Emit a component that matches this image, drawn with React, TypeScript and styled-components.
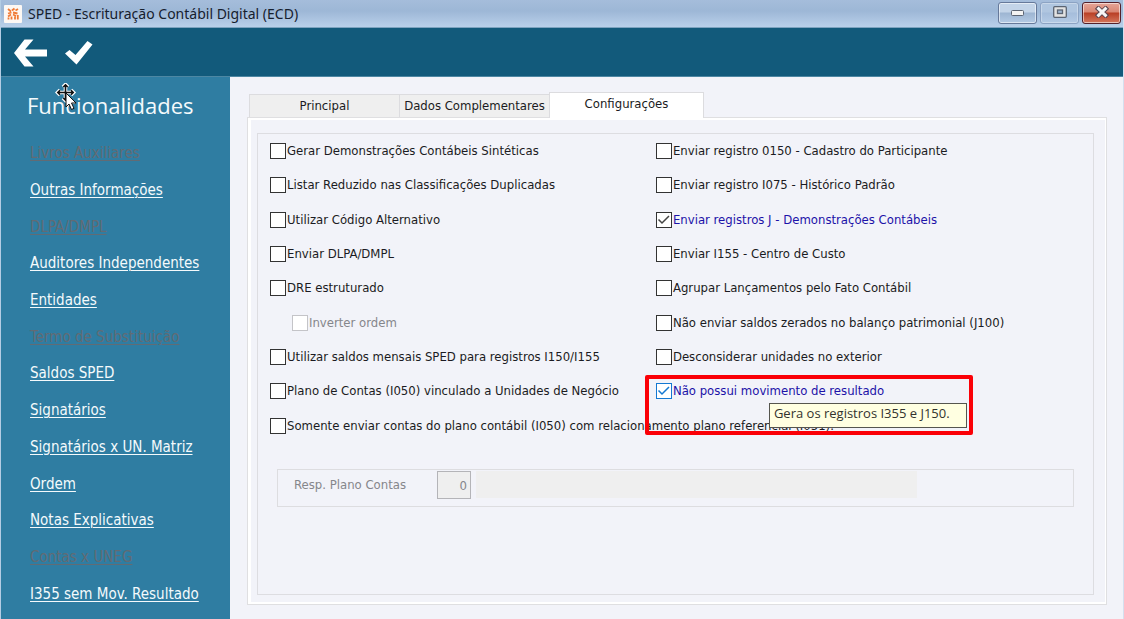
import React, { useState } from "react";
import styled, { createGlobalStyle, css } from "styled-components";

const uiFont = `"DejaVu Sans Condensed", "Noto Sans", sans-serif`;
const titleFont = `"Noto Sans", sans-serif`;
const humanist = `"Open Sans", "Noto Sans", sans-serif`;

const GlobalStyle = createGlobalStyle`
  *, *::before, *::after { box-sizing: border-box; }
  body { margin: 0; background: #f2f3f9; font-family: ${uiFont}; color: #1b1b22; }
  button, input { font-family: inherit; }
`;

const Window = styled.div`
  display: flex;
  flex-direction: column;
  min-height: 100vh;
  border-left: 1px solid #b4cde4;
  border-right: 1px solid #d5e0ef;
`;

const TitleBar = styled.header`
  display: flex;
  align-items: center;
  height: 28px;
  padding: 0 2px 0 3px;
  background: linear-gradient(#a5bddb, #9db7d6 40%, #b9d0ea);
  border-bottom: 1px solid #7da3bf;
`;

const AppIcon = styled.svg`
  width: 18px;
  height: 18px;
  margin-right: 6px;
`;

const Title = styled.h1`
  flex: 1;
  margin: 0;
  font: 400 14px/20px ${titleFont};
  color: #16202e;
`;

const WindowButtons = styled.div`
  display: flex;
  align-self: flex-start;
  gap: 3px;
  padding-top: 2px;
`;

const WindowButton = styled.button<{ $tone?: "soft" | "close" }>`
  display: flex;
  align-items: center;
  justify-content: center;
  width: 39px;
  height: 22px;
  padding: 0 0 2px;
  border: 1px solid #66799a;
  border-radius: 3px;
  box-shadow: inset 0 0 0 1px rgba(255, 255, 255, 0.55);
  background: linear-gradient(#c3d4e8 45%, #9db5d2 50%, #b4cbe5);
  ${(p) =>
    p.$tone === "soft" &&
    css`
      border-color: #8ca3c3;
      box-shadow: inset 0 0 0 1px rgba(255, 255, 255, 0.3);
      background: linear-gradient(#b0c6e0 45%, #a5bddb 50%, #b4cbe5);
    `}
  ${(p) =>
    p.$tone === "close" &&
    css`
      border-color: #54212b;
      background: linear-gradient(#e6a598, #d98673 45%, #b93f25 50%, #d4775c);
    `}
`;

const Toolbar = styled.div`
  display: flex;
  align-items: center;
  gap: 17px;
  height: 49px;
  padding: 2px 0 0 12px;
  background: #125a7b;
  border-bottom: 1px solid #4d87a3;
`;

const ToolButton = styled.button`
  display: flex;
  padding: 0;
  border: 0;
  background: none;
`;

const Body = styled.div`
  display: flex;
  flex: 1;
`;

const Sidebar = styled.nav`
  position: relative;
  display: flex;
  flex-direction: column;
  width: 229px;
  flex-shrink: 0;
  padding: 12px 0 7px 26px;
  background: #2f7da2;
`;

const SidebarTitle = styled.h2`
  margin: 0 0 14px;
  font: 400 22px/32px ${humanist};
  color: #f4fafc;
`;

const LinkList = styled.ul`
  display: flex;
  flex: 1;
  flex-direction: column;
  margin: 0;
  padding: 0 0 0 3px;
  list-style: none;
`;

const LinkItem = styled.li`
  display: flex;
  flex: 1;
  align-items: center;
`;

const SideLink = styled.a<{ $off?: boolean }>`
  font-size: 15px;
  line-height: 24px;
  white-space: nowrap;
  color: ${(p) => (p.$off ? "#626b74" : "#f4fafc")};
  text-decoration: underline;
  text-decoration-thickness: 1px;
  text-underline-offset: 2px;
`;

const Pointer = styled.svg`
  position: absolute;
  left: 54px;
  top: 6px;
  width: 22px;
  height: 28px;
`;

const Main = styled.main`
  display: flex;
  flex: 1;
  flex-direction: column;
  min-width: 0;
  padding: 15px 16px 14px 17px;
`;

const Tabs = styled.div`
  display: flex;
  align-items: flex-end;
  height: 25px;
  padding-left: 2px;
`;

const Tab = styled.button<{ $active?: boolean }>`
  width: ${(p) => (p.$active ? 155 : 150)}px;
  height: ${(p) => (p.$active ? 26 : 23)}px;
  margin-bottom: ${(p) => (p.$active ? -1 : 0)}px;
  padding: 0 0 ${(p) => (p.$active ? 3 : 0)}px;
  border: 1px solid #dcdcdf;
  border-bottom: 0;
  border-right-width: ${(p) => (p.$active ? 1 : 0)}px;
  background: ${(p) => (p.$active ? "#fff" : "#efefef")};
  font-size: 13px;
  line-height: 20px;
  color: #1b1b22;
  white-space: nowrap;
  z-index: 1;
`;

const TabPanel = styled.section`
  display: flex;
  flex: 1;
  flex-direction: column;
  padding: 15px 12px 9px 9px;
  border: 1px solid #dfdfe1;
  box-shadow: inset 3px 2px 0 #fff, inset -1px -2px 0 #fff;
`;

const Group = styled.div`
  display: flex;
  flex: 1;
  flex-direction: column;
  padding: 0 19px 87px 12px;
  border: 1px solid #dddde1;
`;

const Options = styled.div`
  display: grid;
  flex: 1;
  grid-template-columns: minmax(0, 12fr) minmax(0, 13fr);
  grid-template-rows: repeat(9, minmax(0, 1fr));
  grid-auto-flow: column;
`;

const OptionRow = styled.div<{ $indent?: boolean }>`
  position: relative;
  display: flex;
  align-items: center;
  padding-left: ${(p) => (p.$indent ? 22 : 0)}px;
`;

const OptionLabel = styled.label<{ $checked?: boolean; $off?: boolean }>`
  display: flex;
  align-items: center;
  gap: 1px;
  font-size: 13px;
  line-height: 20px;
  white-space: nowrap;
  color: ${(p) => (p.$off ? "#85868b" : p.$checked ? "#1c12a8" : "#1b1b22")};
`;

const tick = (color: string) =>
  `url("data:image/svg+xml,%3Csvg xmlns='http://www.w3.org/2000/svg' viewBox='0 0 14 14'%3E%3Cpath d='M1.5 6.5 5 10 12 3' fill='none' stroke='%23${color}' stroke-width='1.5'/%3E%3C/svg%3E")`;

const Check = styled.input<{ $hot?: boolean }>`
  appearance: none;
  width: 16px;
  height: 16px;
  margin: 0;
  flex-shrink: 0;
  border: 1px solid ${(p) => (p.$hot ? "#1478d2" : "#333")};
  background: #fff;
  &:checked {
    background-image: ${(p) => tick(p.$hot ? "1478d2" : "444444")};
  }
  &:disabled {
    border-color: #c4c4c8;
  }
`;

const Highlight = styled.div`
  position: absolute;
  z-index: 2;
  top: 1px;
  left: -11px;
  width: 328px;
  height: 60px;
  border: 4px solid #fb0007;
  border-radius: 2px;
  pointer-events: none;
`;

const Tooltip = styled.div`
  position: absolute;
  z-index: 2;
  top: 29px;
  left: 113px;
  width: 198px;
  height: 25px;
  padding-left: 4px;
  border: 1px solid #55554e;
  background: #ffffe1;
  font: 400 13px/19px ${humanist};
  color: #33332e;
  white-space: nowrap;
`;

const Responsible = styled.div`
  display: flex;
  align-items: flex-start;
  height: 38px;
  margin: 26px 0 0 7px;
  padding: 1px 16px 0;
  border: 1px solid #dddde0;
`;

const FieldLabel = styled.label`
  width: 143px;
  font-size: 13px;
  line-height: 28px;
  color: #85868b;
`;

const CodeInput = styled.input`
  width: 34px;
  height: 28px;
  padding: 1px 3px 0;
  border: 1px solid #b4b4b8;
  background: #efefef;
  font-size: 13px;
  text-align: right;
  color: #85868b;
`;

const NameInput = styled.input`
  flex: 0 1 441px;
  min-width: 0;
  height: 27px;
  margin-left: 5px;
  border: 0;
  background: #efefef;
`;

type Item = {
  text: string;
  checked?: boolean;
  off?: boolean;
  hot?: boolean;
};

const links: { text: string; off?: boolean }[] = [
  { text: "Livros Auxiliares", off: true },
  { text: "Outras Informações" },
  { text: "DLPA/DMPL", off: true },
  { text: "Auditores Independentes" },
  { text: "Entidades" },
  { text: "Termo de Substituição", off: true },
  { text: "Saldos SPED" },
  { text: "Signatários" },
  { text: "Signatários x UN. Matriz" },
  { text: "Ordem" },
  { text: "Notas Explicativas" },
  { text: "Contas x UNEG", off: true },
  { text: "I355 sem Mov. Resultado" },
];

const items: Item[] = [
  { text: "Gerar Demonstrações Contábeis Sintéticas" },
  { text: "Listar Reduzido nas Classificações Duplicadas" },
  { text: "Utilizar Código Alternativo" },
  { text: "Enviar DLPA/DMPL" },
  { text: "DRE estruturado" },
  { text: "Inverter ordem", off: true },
  { text: "Utilizar saldos mensais SPED para registros I150/I155" },
  { text: "Plano de Contas (I050) vinculado a Unidades de Negócio" },
  { text: "Somente enviar contas do plano contábil (I050) com relacionamento plano referencial (I051)." },
  { text: "Enviar registro 0150 - Cadastro do Participante" },
  { text: "Enviar registro I075 - Histórico Padrão" },
  { text: "Enviar registros J - Demonstrações Contábeis", checked: true },
  { text: "Enviar I155 - Centro de Custo" },
  { text: "Agrupar Lançamentos pelo Fato Contábil" },
  { text: "Não enviar saldos zerados no balanço patrimonial (J100)" },
  { text: "Desconsiderar unidades no exterior" },
  { text: "Não possui movimento de resultado", checked: true, hot: true },
];

function Option({ item, id }: { item: Item; id: string }) {
  const [on, setOn] = useState(!!item.checked);
  return (
    <OptionRow $indent={item.off}>
      <OptionLabel htmlFor={id} $checked={on} $off={item.off}>
        <Check
          id={id}
          type="checkbox"
          checked={on}
          disabled={item.off}
          $hot={item.hot}
          onChange={() => setOn(!on)}
        />
        {item.text}
      </OptionLabel>
      {item.hot && (
        <>
          <Highlight />
          <Tooltip role="tooltip">Gera os registros I355 e J150.</Tooltip>
        </>
      )}
    </OptionRow>
  );
}

export default function App() {
  return (
    <Window>
      <GlobalStyle />
      <TitleBar>
        <AppIcon viewBox="0 0 18 18" aria-hidden="true">
          <rect width="18" height="18" rx="1" fill="#fdf8f4" />
          <g fill="none" stroke="#f07a35" strokeWidth="1.800">
            <path d="M4 4l3 2.500M8 5.500l2.500-2M11.500 5.500l2.500-1.500M4 8.500l3.500-1M9 7.500l4.500 1M4 11.500l3-2M9 9.500l3 1.500M4.500 14.500v-2M7.500 14.500v-3M11 14.500v-3M13.800 14.500v-4.500" />
          </g>
        </AppIcon>
        <Title>SPED - Escrituração Contábil Digital (ECD)</Title>
        <WindowButtons>
          <WindowButton aria-label="Minimizar">
            <svg width="14" height="7" viewBox="0 0 14 7">
              <rect x="0.500" y="1.500" width="12" height="5" rx="1" fill="#f3f3f3" stroke="#5b6472" />
            </svg>
          </WindowButton>
          <WindowButton $tone="soft" aria-label="Maximizar">
            <svg width="14" height="12" viewBox="0 0 14 12">
              <rect x="0.700" y="0.700" width="12.600" height="10.600" rx="1" fill="#e2e2e2" stroke="#5b6472" strokeWidth="1.300" />
              <rect x="4.500" y="4" width="5" height="3.500" fill="#9db5d2" stroke="#5b6472" strokeWidth="1.300" />
            </svg>
          </WindowButton>
          <WindowButton $tone="close" aria-label="Fechar">
            <svg width="14" height="12" viewBox="0 0 14 12">
              <path d="M1.500 1 12.500 11M12.500 1 1.500 11" stroke="#5d4650" strokeWidth="5" />
              <path d="M2.500 1.700 11.500 10.300M11.500 1.700 2.500 10.300" stroke="#f6f6f6" strokeWidth="3" />
            </svg>
          </WindowButton>
        </WindowButtons>
      </TitleBar>
      <Toolbar>
        <ToolButton aria-label="Voltar">
          <svg width="34" height="28" viewBox="0 0 34 28">
            <path d="M11.500 .5h9L12 10.500H34v7H12L20.500 27.500h-9L1 14z" fill="#fff" />
          </svg>
        </ToolButton>
        <ToolButton aria-label="Confirmar">
          <svg width="29" height="26" viewBox="0 0 29 26">
            <path d="M1 13.500 5.500 10l6 5L23.500 1l5 3.500L12.500 24.500z" fill="#fff" />
          </svg>
        </ToolButton>
      </Toolbar>
      <Body>
        <Sidebar aria-label="Funcionalidades">
          <SidebarTitle>Funcionalidades</SidebarTitle>
          <LinkList>
            {links.map((l) => (
              <LinkItem key={l.text}>
                <SideLink href="#" $off={l.off} aria-disabled={l.off}>
                  {l.text}
                </SideLink>
              </LinkItem>
            ))}
          </LinkList>
          <Pointer viewBox="0 0 22 28" aria-hidden="true">
            <path
              d="M10.500 1.500V17M2.500 9.500h16M8 4l2.500-2.500L13 4M8 15l2.500 2.500L13 15M5 7 2.500 9.500 5 12M16 7l2.500 2.500L16 12"
              fill="none"
              stroke="#fff"
              strokeWidth="3.600"
            />
            <path
              d="M10.500 2V17M3 9.500h15M8.300 4l2.200-2.200L12.700 4M8.300 15l2.200 2.200 2.200-2.200M5 7.300 2.800 9.500 5 11.700M16 7.300l2.200 2.200-2.200 2.200"
              fill="none"
              stroke="#111"
              strokeWidth="1.600"
            />
            <path
              d="M11 10v14l3-3 2.500 5.500 2.500-1.200-2.500-5.300H21z"
              fill="#fff"
              stroke="#111"
              strokeWidth="1"
            />
          </Pointer>
        </Sidebar>
        <Main>
          <Tabs role="tablist">
            <Tab role="tab">Principal</Tab>
            <Tab role="tab">Dados Complementares</Tab>
            <Tab role="tab" aria-selected="true" $active>
              Configurações
            </Tab>
          </Tabs>
          <TabPanel role="tabpanel">
            <Group>
              <Options>
                {items.map((item, i) => (
                  <Option key={item.text} item={item} id={`opt-${i}`} />
                ))}
              </Options>
              <Responsible>
                <FieldLabel htmlFor="resp">Resp. Plano Contas</FieldLabel>
                <CodeInput id="resp" defaultValue="0" disabled />
                <NameInput aria-label="Nome do plano" disabled />
              </Responsible>
            </Group>
          </TabPanel>
        </Main>
      </Body>
    </Window>
  );
}
